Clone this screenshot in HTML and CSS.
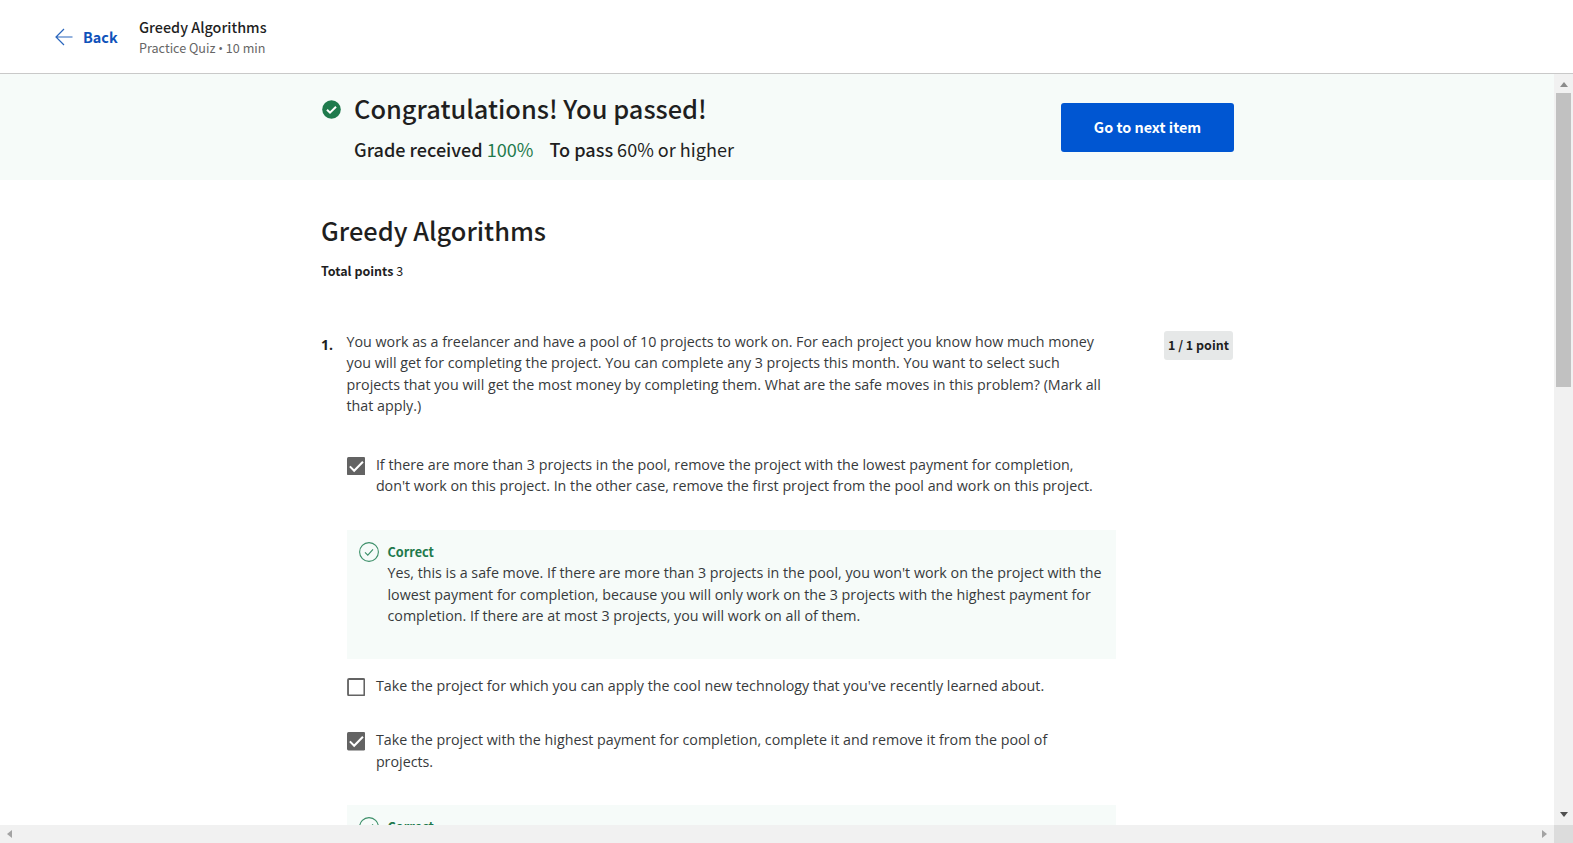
FILE: index.html
```
<!DOCTYPE html>
<html lang="en">
<head>
<meta charset="utf-8">
<title>Greedy Algorithms</title>
<link rel="stylesheet" href="styles.css">
</head>
<body>
<header class="topbar">
  <a class="back"><svg class="back-arrow" viewBox="0 0 18 18"><path d="M17.5 9H1M9 1L1 9l8 8"/></svg><span class="back-label">Back</span></a>
  <div class="item-info">
    <div class="item-name"><span>Greedy Algorithms</span></div>
    <div class="item-meta"><span>Practice Quiz <span class="dot">•</span> 10 min</span></div>
  </div>
</header>
<div class="viewport">
  <main class="page">
    <section class="banner">
      <svg class="pass-icon" viewBox="0 0 19 19"><circle cx="9.5" cy="9.5" r="9.3"/><path d="M5 9.7l3 3 6-6"/></svg>
      <div class="banner-text">
        <h1 class="pass-title"><span>Congratulations! You passed!</span></h1>
        <p class="grade"><span class="grade-part"><b>Grade received</b> <em>100%</em></span><span class="pass-part"><b>To pass</b> 60% or higher</span></p>
      </div>
      <button class="next"><span>Go to next item</span></button>
    </section>
    <section class="quiz">
      <h2 class="quiz-title"><span>Greedy Algorithms</span></h2>
      <p class="total"><span><b>Total points</b> 3</span></p>
      <div class="question">
        <div class="number">1.</div>
        <div class="content">
          <p class="prompt">You work as a freelancer and have a pool of 10 projects to work on. For each project you know how much money<br>you will get for completing the project. You can complete any 3 projects this month. You want to select such<br>projects that you will get the most money by completing them. What are the safe moves in this problem? (Mark all<br>that apply.)</p>
          <div class="option first">
            <svg class="box" viewBox="0 0 18 18"><rect class="fill" width="18" height="18" rx="1.5"/><path class="tick" d="M2.8 9.2l4.2 4.2 8.6-8.8"/></svg>
            <p>If there are more than 3 projects in the pool, remove the project with the lowest payment for completion,<br>don't work on this project. In the other case, remove the first project from the pool and work on this project.</p>
          </div>
          <div class="feedback">
            <svg class="ok" viewBox="0 0 20 20"><circle cx="10" cy="10" r="9.4"/><path d="M6 10.3l2.8 2.8 5.2-5.7"/></svg>
            <div><div class="verdict"><span>Correct</span></div>
            <p>Yes, this is a safe move. If there are more than 3 projects in the pool, you won't work on the project with the<br>lowest payment for completion, because you will only work on the 3 projects with the highest payment for<br>completion. If there are at most 3 projects, you will work on all of them.</p></div>
          </div>
          <div class="option second">
            <svg class="box" viewBox="0 0 18 18"><rect class="empty" x="1" y="1" width="16" height="16" rx="1"/></svg>
            <p>Take the project for which you can apply the cool new technology that you've recently learned about.</p>
          </div>
          <div class="option third">
            <svg class="box" viewBox="0 0 18 18"><rect class="fill" width="18" height="18" rx="1.5"/><path class="tick" d="M2.8 9.2l4.2 4.2 8.6-8.8"/></svg>
            <p>Take the project with the highest payment for completion, complete it and remove it from the pool of<br>projects.</p>
          </div>
          <div class="feedback">
            <svg class="ok" viewBox="0 0 20 20"><circle cx="10" cy="10" r="9.4"/><path d="M6 10.3l2.8 2.8 5.2-5.7"/></svg>
            <div><div class="verdict"><span>Correct</span></div></div>
          </div>
        </div>
        <div class="points"><span>1 / 1 point</span></div>
      </div>
    </section>
  </main>
  <div class="vbar">
    <svg class="up" viewBox="0 0 8 5"><path d="M4 0l4 5H0z"/></svg>
    <div class="thumb"></div>
    <svg class="down" viewBox="0 0 8 5"><path d="M0 0h8L4 5z"/></svg>
  </div>
</div>
<div class="hbar">
  <svg viewBox="0 0 5 8"><path d="M5 0v8L0 4z"/></svg>
  <svg class="right" viewBox="0 0 5 8"><path d="M0 0v8l5-4z"/></svg>
  <div class="corner"></div>
</div>
</body>
</html>
```
FILE: styles.css
```
* { box-sizing: border-box; margin: 0; padding: 0; }
body {
  width: 1573px; height: 843px; overflow: hidden;
  display: flex; flex-direction: column;
  background: #fff; color: #1f1f1f;
  font-family: "Noto Sans CJK SC", "Open Sans", sans-serif;
}
svg { display: block; flex: none; }
.topbar { height: 74px; flex: none; border-bottom: 1px solid #c9c9c9; display: flex; padding-left: 55px; }
.back { display: flex; height: 73px; align-items: center; width: 84px; color: #0f52ba; gap: 10px; }
.back-arrow { width: 18px; height: 18px; fill: none; stroke: #2a66bd; stroke-width: 1.2; }
.back-label { font-size: 14.4px; font-weight: 700; line-height: 20px; }
.item-info { padding-top: 16px; white-space: nowrap; }
.item-name { font-size: 14.4px; font-weight: 500; line-height: 21px; }
.item-meta { font-size: 12.6px; line-height: 21px; color: #666; }
.dot { font-family: "Open Sans", sans-serif; }
.viewport { flex: 1; min-height: 0; display: flex; }
.page { width: 1554px; overflow: hidden; }
.banner { height: 106px; background: #f6fbf9; padding: 0 320px 0 322px; display: flex; }
.pass-icon { width: 19px; height: 19px; margin: 26px 13px 0 0; fill: #1f7a4d; }
.pass-icon path { fill: none; stroke: #fff; stroke-width: 2; }
.banner-text { flex: 1; padding-top: 16px; white-space: nowrap; }
.pass-title { font-size: 25.4px; font-weight: 500; line-height: 36px; }
.grade { font-size: 18.07px; line-height: 28px; margin-top: 9px; display: flex; gap: 16px; }
.grade b { font-weight: 500; }
.grade em { font-style: normal; color: #1f7a4d; }
.next { width: 173px; height: 49px; margin-top: 29px; padding-bottom: 2px; border: 0; border-radius: 3px; background: #0056d2; color: #fff; font: 700 14.4px/20px "Noto Sans CJK SC", sans-serif; }
.quiz { padding: 32px 0 0 321px; }
.quiz-title { font-size: 25.4px; font-weight: 500; line-height: 36px; }
.total { font-size: 12.5px; line-height: 20px; margin-top: 13px; }
.question { display: flex; margin-top: 50px; }
.number { width: 25.5px; font: 700 14px/21px "Open Sans", sans-serif; padding-top: 3px; }
.content { width: 769.5px; font-family: "Open Sans", sans-serif; font-size: 14.27px; line-height: 21.4px; color: #373a3c; white-space: nowrap; }
.option { display: flex; gap: 11px; }
.first { margin: 37px 0 33.4px; }
.second { margin: 16px 0 33px; }
.third { margin-bottom: 32.6px; }
.box { width: 18.4px; height: 18.4px; margin-top: 3px; }
.fill { fill: #636363; }
.tick { fill: none; stroke: #fff; stroke-width: 2; }
.empty { fill: #fff; stroke: #636363; stroke-width: 1.8; }
.feedback { display: flex; gap: 9px; height: 129px; background: #f6fbf9; padding: 12.5px 0 0 12px; }
.ok { width: 20px; height: 20px; fill: none; stroke: #3c8f69; stroke-width: 1.1; }
.verdict { font: 700 12.7px/20px "Noto Sans CJK SC", sans-serif; color: #1f7a4d; }
.points { width: 69px; height: 29px; margin-left: 48px; background: #e6e8e8; border-radius: 3px; text-align: center; font-size: 12.5px; font-weight: 700; line-height: 28px; white-space: nowrap; }
.vbar { width: 19px; background: #f1f1f1; display: flex; flex-direction: column; align-items: center; }
.vbar svg { width: 8px; height: 5px; }
.up { fill: #8b8b8b; margin-top: 8px; }
.thumb { width: 15px; height: 294px; margin-top: 6px; background: #c1c1c1; }
.down { fill: #505050; margin: auto 0 8px; }
.hbar { flex: none; height: 18px; background: #f1f1f1; display: flex; align-items: center; padding-left: 7px; fill: #a3a3a3; }
.hbar svg { width: 5px; height: 8px; }
.right { margin-left: auto; }
.corner { width: 19px; height: 18px; margin-left: 7px; background: #dcdcdc; }
```
